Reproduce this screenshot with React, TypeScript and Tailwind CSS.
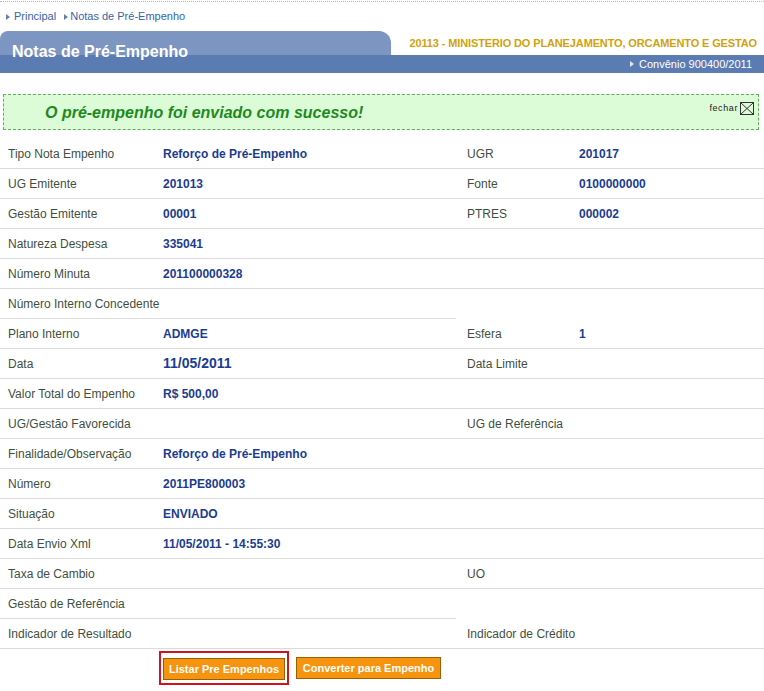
import React from "react";

type Row = { l: string; v?: string; rl?: string; rv?: string; big?: boolean; noRightBorder?: boolean };

const rows: Row[] = [
  { l: "Tipo Nota Empenho", v: "Reforço de Pré-Empenho", rl: "UGR", rv: "201017" },
  { l: "UG Emitente", v: "201013", rl: "Fonte", rv: "0100000000" },
  { l: "Gestão Emitente", v: "00001", rl: "PTRES", rv: "000002" },
  { l: "Natureza Despesa", v: "335041" },
  { l: "Número Minuta", v: "201100000328" },
  { l: "Número Interno Concedente", noRightBorder: true },
  { l: "Plano Interno", v: "ADMGE", rl: "Esfera", rv: "1" },
  { l: "Data", v: "11/05/2011", rl: "Data Limite", big: true },
  { l: "Valor Total do Empenho", v: "R$ 500,00" },
  { l: "UG/Gestão Favorecida", rl: "UG de Referência" },
  { l: "Finalidade/Observação", v: "Reforço de Pré-Empenho" },
  { l: "Número", v: "2011PE800003" },
  { l: "Situação", v: "ENVIADO" },
  { l: "Data Envio Xml", v: "11/05/2011 - 14:55:30" },
  { l: "Taxa de Cambio", rl: "UO" },
  { l: "Gestão de Referência", noRightBorder: true },
  { l: "Indicador de Resultado", rl: "Indicador de Crédito" },
];

function Tri({ color }: { color: string }) {
  return (
    <svg width="4" height="6" viewBox="0 0 4 6" className="inline-block" style={{ fill: color }}>
      <polygon points="0,0 4,3 0,6" />
    </svg>
  );
}

export default function App() {
  return (
    <div className="w-[764px] h-[691px] bg-white overflow-hidden font-['Liberation_Sans',Arial,sans-serif]">
      <div className="h-[2px] border-t border-dotted border-[#b8b8b8] mt-[1px]" />
      {/* breadcrumb */}
      <div className="h-[28px] flex items-center pl-[6px] text-[11px] text-[#3565a8] pb-[1px]">
        <Tri color="#6a7f9f" />
        <span className="ml-[4px]">Principal</span>
        <span className="ml-[8px]"><Tri color="#6a7f9f" /></span>
        <span className="ml-[2px]">Notas de Pré-Empenho</span>
      </div>
      {/* header */}
      <div className="relative h-[42px]">
        <div className="flex h-[24px]">
          <div className="w-[391px] h-[24px] bg-[#7c95c1] rounded-tr-[12px] rounded-tl-[8px]" />
          <div className="flex-1 flex items-center justify-end pr-[7px] pt-[1px] text-[11px] font-bold tracking-[-0.13px] text-[#d1a20c]">
            20113 - MINISTERIO DO PLANEJAMENTO, ORCAMENTO E GESTAO
          </div>
        </div>
        <div className="h-[18px] bg-[#5b7cb2] flex items-center justify-end gap-[5px] pr-[12px] text-[11px] text-white">
          <Tri color="#dfe6f2" />
          <span>Convênio 900400/2011</span>
        </div>
        <div className="absolute left-[12px] top-[10px] text-[16px] font-bold text-white leading-[22px]">
          Notas de Pré-Empenho
        </div>
      </div>
      {/* success */}
      <div className="mt-[21px] ml-[3px] w-[756px] h-[36px] border border-dashed border-[#5fae5f] bg-[#dcfcd8] flex items-center justify-between pl-[41px] pr-[4px]">
        <span className="text-[16px] font-bold italic text-[#1f8a1f] pt-[2px]">O pré-empenho foi enviado com sucesso!</span>
        <div className="flex items-start gap-[2px] self-start mt-[7px]">
          <span className="text-[9px] text-[#222] tracking-[0.6px] leading-[12px]">fechar</span>
          <svg width="14" height="13" viewBox="0 0 14 13">
            <rect x="0.5" y="0.5" width="13" height="12" fill="none" stroke="#333" strokeWidth="1" />
            <line x1="1" y1="1" x2="13" y2="12" stroke="#333" strokeWidth="1" />
            <line x1="13" y1="1" x2="1" y2="12" stroke="#333" strokeWidth="1" />
          </svg>
        </div>
      </div>
      {/* table */}
      <div className="mt-[9px]">
        {rows.map((r, i) => (
          <div key={i} className="flex h-[30px] text-[12px]">
            <div className="w-[456px] flex items-center border-b border-[#dcdcdc]">
              <div className="w-[163px] pl-[8px] text-[#3f4f3f]">{r.l}</div>
              <div className={r.big ? "text-[14px] font-bold text-[#1b3c91]" : "font-bold text-[#1b3c91]"}>{r.v}</div>
            </div>
            <div className={r.noRightBorder ? "flex-1 flex items-center" : "flex-1 flex items-center border-b border-[#dcdcdc]"}>
              <div className="w-[123px] pl-[11px] text-[#3f4f3f]">{r.rl}</div>
              <div className="font-bold text-[#1b3c91]">{r.rv}</div>
            </div>
          </div>
        ))}
      </div>
      {/* buttons */}
      <div className="flex items-center pl-[159px] pt-[2px] gap-[7px]">
        <div className="border-2 border-[#d0141e] px-[2px] pt-[3px] pb-[3px]">
          <button className="w-[122px] h-[22px] bg-[#f7940f] border border-[#9a6000] text-white text-[11px] font-bold">
            Listar Pre Empenhos
          </button>
        </div>
        <button className="w-[145px] h-[22px] bg-[#f7940f] border border-[#9a6000] text-white text-[11px] font-bold">
          Converter para Empenho
        </button>
      </div>
    </div>
  );
}
